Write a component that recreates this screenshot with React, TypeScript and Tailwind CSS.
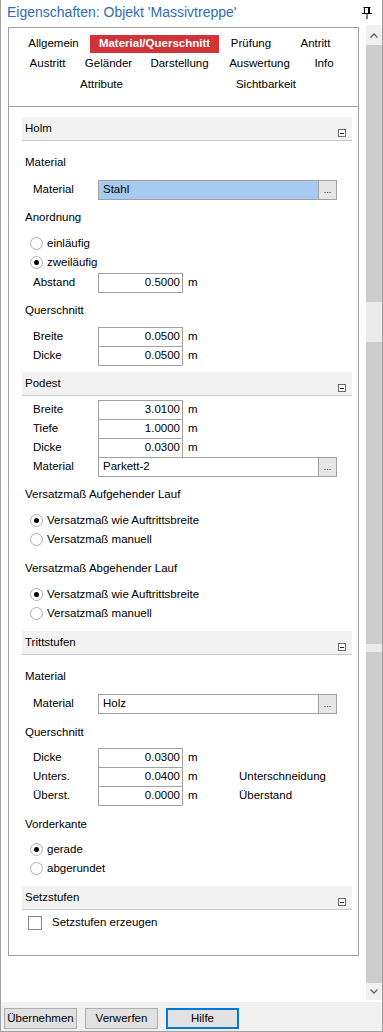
import React from 'react';

// --- kleine Bausteine ---
const Chevron = ({ up }: { up?: boolean }) => (
  <svg width="8" height="5" viewBox="0 0 8 5">
    <polyline
      points={up ? '0.5,4.5 4,1 7.5,4.5' : '0.5,0.5 4,4 7.5,0.5'}
      fill="none"
      stroke="#606060"
      strokeWidth="1.3"
    />
  </svg>
);

const Pin = () => (
  <svg width="10" height="12" viewBox="0 0 10 12">
    <path d="M1.5 0.5H8.5" stroke="#000" />
    <path d="M2.5 0.5V6.5" stroke="#000" />
    <rect x="6" y="0.5" width="2" height="6" fill="#000" />
    <path d="M0 6.5H10" stroke="#000" />
    <path d="M5 7V12" stroke="#000" />
  </svg>
);

const SectionHeader = ({ title, className = '' }: { title: string; className?: string }) => (
  <div className={`h-[24px] bg-[#f2f2f2] border-b border-[#c8c8c8] flex items-center justify-between pl-[3px] pr-[6px] ${className}`}>
    <span>{title}</span>
    <span className="self-end mb-[3px] w-[8px] h-[8px] border border-[#6d6d6d] bg-white flex items-center justify-center">
      <span className="w-[4px] h-px bg-[#222]" />
    </span>
  </div>
);

const Heading = ({ text, className = '' }: { text: string; className?: string }) => (
  <div className={`h-[20px] flex items-center pl-[3px] ${className}`}>{text}</div>
);

const FieldRow = ({ label, value, note }: { label: string; value: string; note?: string }) => (
  <div className="h-[19px] flex items-start pl-[11px]">
    <span className="w-[65px] h-[20px] flex items-center shrink-0">{label}</span>
    <div className="w-[85px] h-[20px] border border-[#a0a0a0] bg-white flex items-center justify-end pr-[2px] shrink-0">
      {value}
    </div>
    <span className="w-[56px] h-[20px] pl-[5px] flex items-center shrink-0">m</span>
    {note && <span className="h-[20px] flex items-center">{note}</span>}
  </div>
);

const MaterialRow = ({ value, selected, className = '', rowH = 'h-[20px]' }: any) => (
  <div className={`${rowH} flex items-start pl-[11px] ${className}`}>
    <span className="w-[65px] h-[20px] flex items-center shrink-0">Material</span>
    <div className="w-[239px] h-[20px] border border-[#a0a0a0] flex shrink-0">
      <div className={`flex-1 flex items-center pl-[4px] ${selected ? 'bg-[#a6caf0]' : 'bg-white'}`}>{value}</div>
      <div className="w-[18px] bg-[#e6e6e6] border-l border-[#a0a0a0] flex items-end justify-center pb-[4px] text-[9px] leading-none">
        ...
      </div>
    </div>
  </div>
);

const Radio = ({ label, checked }: { label: string; checked?: boolean }) => (
  <div className="h-[19px] flex items-center pl-[8px]">
    <span className="w-[13px] h-[13px] rounded-full border border-[#b0b0b0] bg-white flex items-center justify-center shrink-0">
      {checked && <span className="w-[5px] h-[5px] rounded-full bg-black" />}
    </span>
    <span className="ml-[4px]">{label}</span>
  </div>
);

const Tab = ({ label, w, active }: { label: string; w: string; active?: boolean }) => (
  <div className={`${w} h-[20px] flex items-center justify-center shrink-0`}>
    {active ? (
      <span className="w-full h-[18px] bg-[#d13438] text-white font-bold flex items-center justify-center">{label}</span>
    ) : (
      <span>{label}</span>
    )}
  </div>
);

const Button = ({ label, focus }: { label: string; focus?: boolean }) => (
  <button
    className={`w-[73px] h-[21px] bg-[#e1e1e1] flex items-center justify-center ${
      focus ? 'border-2 border-[#0078d7]' : 'border border-[#adadad]'
    }`}
  >
    {label}
  </button>
);

// --- Hauptfenster ---
export default function App() {
  return (
    <div className="w-[383px] h-[1032px] bg-white border-l border-r border-b border-[#a0a0a0] flex flex-col text-[11.5px] text-black font-['Liberation_Sans',Arial,sans-serif] overflow-hidden">
      {/* Titel */}
      <div className="h-[25px] flex items-center pl-[6px] shrink-0">
        <span className="text-[14px] text-[#2f6cb5]">Eigenschaften: Objekt 'Massivtreppe'</span>
        <span className="ml-auto mr-[10px] flex">
          <Pin />
        </span>
      </div>

      <div className="flex flex-1 min-h-0">
        <div className="pl-[7px] pt-[2px]">
          <div className="w-[351px] h-[929px] border border-[#a0a0a0] flex flex-col">
            {/* Reiter */}
            <div className="h-[79px] border-b border-[#a0a0a0] pt-[6px] shrink-0">
              <div className="flex pl-[8px]">
                <Tab label="Allgemein" w="w-[73px]" />
                <Tab label="Material/Querschnitt" w="w-[129px]" active />
                <Tab label="Prüfung" w="w-[64px]" />
                <Tab label="Antritt" w="w-[65px]" />
              </div>
              <div className="flex pl-[8px]">
                <Tab label="Austritt" w="w-[61px]" />
                <Tab label="Geländer" w="w-[61px]" />
                <Tab label="Darstellung" w="w-[81px]" />
                <Tab label="Auswertung" w="w-[79px]" />
                <Tab label="Info" w="w-[50px]" />
              </div>
              <div className="flex pl-[11px] mt-[1px]">
                <Tab label="Attribute" w="w-[163px]" />
                <Tab label="Sichtbarkeit" w="w-[166px]" />
              </div>
            </div>

            {/* Inhalt */}
            <div className="pl-[13px] pr-[6px]">
              <SectionHeader title="Holm" className="mt-[10px]" />
              <Heading text="Material" className="mt-[12px]" />
              <MaterialRow value="Stahl" selected className="mt-[7px]" />
              <Heading text="Anordnung" className="mt-[8px]" />
              <div className="mt-[6px]">
                <Radio label="einläufig" />
                <Radio label="zweiläufig" checked />
              </div>
              <div className="mt-[1px] h-[20px]">
                <FieldRow label="Abstand" value="0.5000" />
              </div>
              <Heading text="Querschnitt" className="mt-[8px]" />
              <div className="mt-[6px]">
                <FieldRow label="Breite" value="0.0500" />
                <FieldRow label="Dicke" value="0.0500" />
              </div>

              <SectionHeader title="Podest" className="mt-[7px]" />
              <div className="mt-[4px]">
                <FieldRow label="Breite" value="3.0100" />
                <FieldRow label="Tiefe" value="1.0000" />
                <FieldRow label="Dicke" value="0.0300" />
                <MaterialRow value="Parkett-2" rowH="h-[19px]" />
              </div>
              <Heading text="Versatzmaß Aufgehender Lauf" className="mt-[9px]" />
              <div className="mt-[6px]">
                <Radio label="Versatzmaß wie Auftrittsbreite" checked />
                <Radio label="Versatzmaß manuell" />
              </div>
              <Heading text="Versatzmaß Abgehender Lauf" className="mt-[10px]" />
              <div className="mt-[6px]">
                <Radio label="Versatzmaß wie Auftrittsbreite" checked />
                <Radio label="Versatzmaß manuell" />
              </div>

              <SectionHeader title="Trittstufen" className="mt-[8px]" />
              <Heading text="Material" className="mt-[12px]" />
              <MaterialRow value="Holz" className="mt-[7px]" />
              <Heading text="Querschnitt" className="mt-[9px]" />
              <div className="mt-[5px]">
                <FieldRow label="Dicke" value="0.0300" />
                <FieldRow label="Unters." value="0.0400" note="Unterschneidung" />
                <FieldRow label="Überst." value="0.0000" note="Überstand" />
              </div>
              <Heading text="Vorderkante" className="mt-[10px]" />
              <div className="mt-[5px]">
                <Radio label="gerade" checked />
                <Radio label="abgerundet" />
              </div>

              <SectionHeader title="Setzstufen" className="mt-[8px]" />
              <div className="mt-[3px] h-[20px] flex items-center pl-[6px]">
                <span className="w-[14px] h-[14px] border border-[#8a8a8a] bg-white shrink-0" />
                <span className="ml-[10px]">Setzstufen erzeugen</span>
              </div>
            </div>
          </div>
        </div>

        {/* Bildlaufleiste */}
        <div className="ml-[7px] w-[16px] h-[975px] bg-[#f0f0f0] flex flex-col shrink-0">
          <div className="h-[20px] flex items-center justify-center">
            <Chevron up />
          </div>
          <div className="h-[257px] bg-[#cdcdcd]" />
          <div className="h-[40px] bg-[#ebebeb]" />
          <div className="h-[302px] bg-[#cdcdcd]" />
          <div className="h-[8px] bg-[#ebebeb]" />
          <div className="h-[331px] bg-[#cdcdcd]" />
          <div className="h-[17px] flex items-center justify-center">
            <Chevron />
          </div>
        </div>
      </div>

      {/* Schaltflächen */}
      <div className="h-[29px] bg-[#f0f0f0] flex items-start gap-[8px] pl-[3px] pt-[6px] shrink-0">
        <Button label="Übernehmen" />
        <Button label="Verwerfen" />
        <Button label="Hilfe" focus />
      </div>
    </div>
  );
}
